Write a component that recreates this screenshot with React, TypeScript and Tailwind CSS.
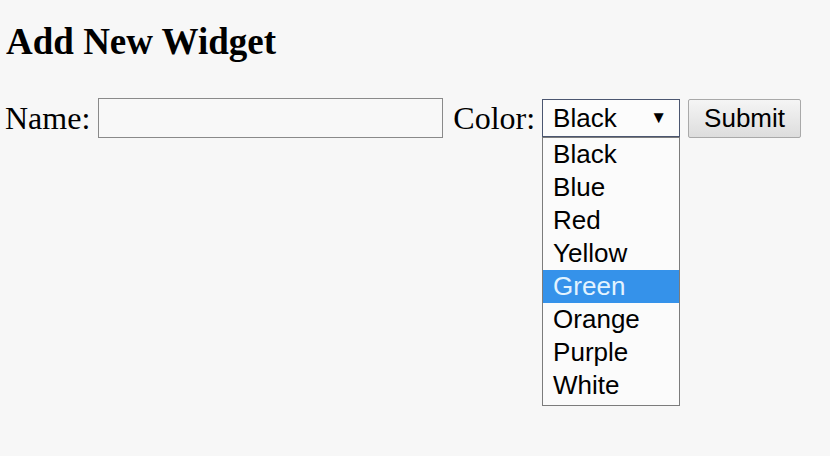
import React from 'react';

const colors = ['Black', 'Blue', 'Red', 'Yellow', 'Green', 'Orange', 'Purple', 'White'];

export default function App() {
  const highlighted = 'Green';

  return (
    <div className="w-[830px] h-[456px] bg-[#f7f7f7] text-black overflow-hidden" style={{ fontFamily: '"Liberation Serif", serif' }}>
      <h3 className="pl-[6px] pt-[20px] text-[37px] leading-[44px] font-bold">Add New Widget</h3>

      <form className="flex items-center pl-[5px] mt-[34px] text-[32px] leading-[40px]">
        <label className="mr-[8px]">Name:</label>
        <div className="w-[345px] h-[40px] border border-[#8a8a8a] bg-[#f8f8f8]" />
        <label className="ml-[10px] mr-[7px]">Color:</label>

        <div className="relative">
          <div
            className="w-[138px] h-[38px] border border-[#4b5670] bg-[#fcfcfc] flex items-center justify-between pl-[10px] pr-[12px] text-[26px]"
            style={{ fontFamily: '"Liberation Sans", Arial, sans-serif' }}
          >
            <span>Black</span>
            <span className="text-[17px]">▼</span>
          </div>

          <ul
            className="absolute left-0 top-[38px] w-[138px] border border-[#7c7c7c] bg-[#fbfbfb] pb-[3px] text-[26px] leading-[33px]"
            style={{ fontFamily: '"Liberation Sans", Arial, sans-serif' }}
          >
            {colors.map((c) => (
              <li
                key={c}
                className={
                  c === highlighted
                    ? 'h-[33px] pl-[10px] bg-[#3592ea] text-[#e2f3ff]'
                    : 'h-[33px] pl-[10px]'
                }
              >
                {c}
              </li>
            ))}
          </ul>
        </div>

        <button
          type="button"
          className="ml-[8px] w-[113px] h-[39px] border border-[#a9a9a9] rounded-[2px] bg-gradient-to-b from-[#f5f5f5] to-[#dddddd] text-[26px] leading-none"
          style={{ fontFamily: '"Liberation Sans", Arial, sans-serif' }}
        >
          Submit
        </button>
      </form>
    </div>
  );
}
